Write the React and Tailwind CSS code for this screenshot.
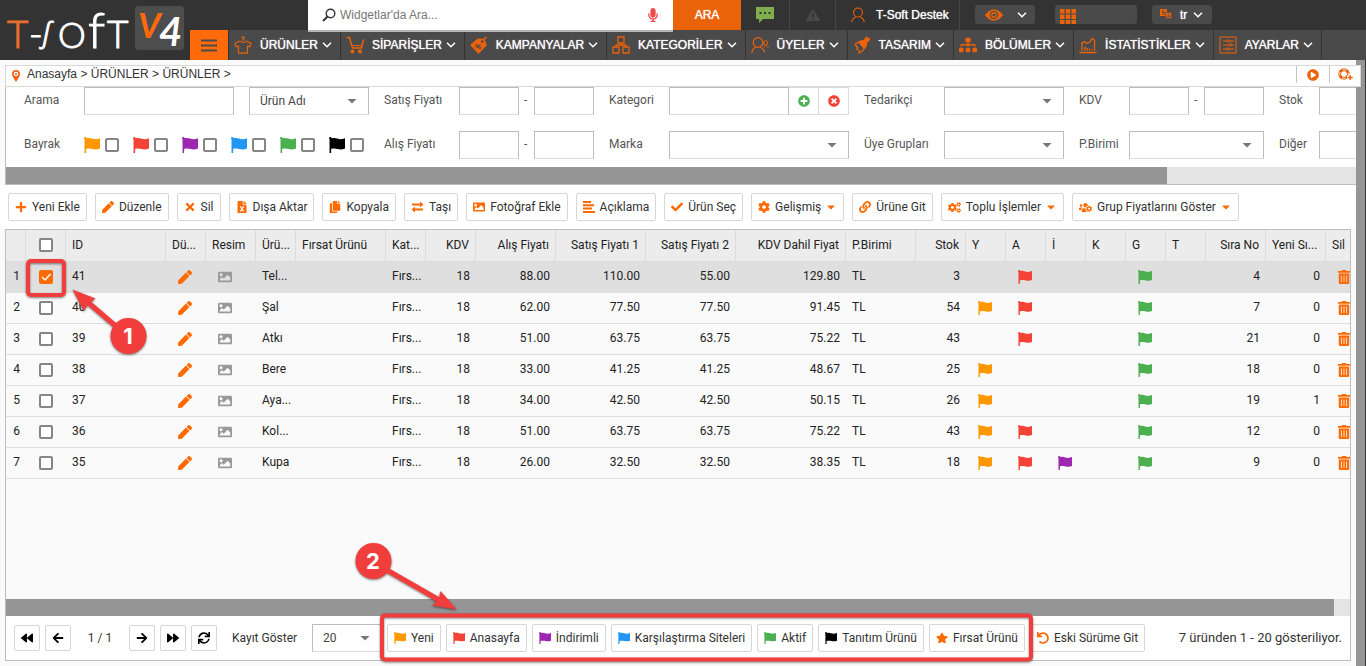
import React from "react";
import {
  FaArrowLeft, FaArrowRight, FaBackward, FaCaretDown, FaCheck, FaCog, FaCogs, FaCopy,
  FaFileExcel, FaForward, FaImage, FaLink, FaPen, FaPlayCircle, FaPlus, FaPlusCircle, FaSitemap,
  FaStar, FaSync, FaTimes, FaTimesCircle, FaTrashAlt, FaUndo, FaUsersCog, FaMicrophone,
} from "react-icons/fa";

const Line = ({ children, className = "size-[18px]", width = 1.2 }) => (
  <svg viewBox="0 0 18 18" className={className} fill="none" stroke="currentColor" strokeWidth={width} strokeLinejoin="round" aria-hidden="true">
    {children}
  </svg>
);

const ShirtIcon = () => (
  <Line>
    <path d="M9 5V3.400c1.400-.3 1.500-2.300 0-2.500-.9 0-1.300.6-1.300 1.200" />
    <path d="M6 5 1 7.200l1.200 3.600 2.300-.7v7h9v-7l2.300.7L17 7.200 12 5" />
    <path d="M6 5c1 2 5 2 6 0" />
  </Line>
);
const CartIcon = () => (
  <Line width={1.400}>
    <path d="M.5 1.500h3l3 10.500h9l2-8.500" />
    <path d="M6 9.500h9" strokeWidth="1" />
    <circle cx="6.500" cy="15.500" r="1.300" fill="currentColor" />
    <circle cx="14" cy="15.500" r="1.300" fill="currentColor" />
  </Line>
);
const TagIcon = () => (
  <Line>
    <path d="M1 9 8 3l6 .3 2 5.700-7.500 8z" fill="currentColor" />
    <path d="m11.500 5.800 5-4.800" strokeWidth="1.500" />
    <circle cx="12.300" cy="5.600" r="1.300" fill="#4a4a4a" stroke="none" />
    <path d="m6.500 12 4-3.500" stroke="#4a4a4a" />
    <circle cx="6.600" cy="9.300" r="1" stroke="#4a4a4a" strokeWidth=".9" />
    <circle cx="10" cy="11.900" r="1" stroke="#4a4a4a" strokeWidth=".9" />
  </Line>
);
const BoxesIcon = () => (
  <Line width={1.300}>
    <path d="M6 1h6v6H6zM1 11h6v6H1zM11 11h6v6h-6zM9 7v2M4 11V9h10v2" />
  </Line>
);
const UserIcon = ({ className }) => (
  <Line className={className}>
    <circle cx="9" cy="6.200" r="5" />
    <path d="M2 17c.2-3.600 2-4.800 4.700-5.800M16 17c-.2-3.600-2-4.800-4.700-5.800" />
  </Line>
);
const UsersIcon = () => (
  <Line>
    <circle cx="7" cy="6.500" r="4.800" />
    <path d="M.8 17c.2-3.600 1.600-4.800 4-5.800M13.500 16.500c-.2-3-1.800-4.300-4.200-5.300" />
    <circle cx="14.600" cy="6.800" r="2" strokeWidth="1" />
    <path d="M13 11.500c.3-1.500 1-2 1.600-2 1.600 0 2.400 1 2.700 2.500" strokeWidth="1" />
  </Line>
);
const BrushIcon = () => (
  <Line>
    <path d="M5.500 6 9 4.500 10.500 5l3-4 1 1.500L16 2l.5 1.500-3.500 4 .5 2-2 3z" fill="currentColor" />
    <path d="M5.500 6 2 8.500l2.500 3-1 1.500 2.500 1v3l4-2.500 1.500-3" />
  </Line>
);
const ChartIcon = () => (
  <Line width={1.300}>
    <path d="M.5 16.500h17M3 14.500V6M15.500 14.500V4M3 7.500l2.500-2 2.500 2 3-1.500 2-3.500 3 2" />
    <path d="M6 14.500v-4M8.300 14.500V12M10.500 14.500v-2M13 14.500v-1" />
  </Line>
);
const SlidersIcon = () => (
  <Line width={1}>
    <path d="M1 1h16v16H1zM4 5h4M11 5h4M4 9h6M13 9h2M4 13h3M10 13h5" />
    <circle cx="9.500" cy="5" r="1.300" />
    <circle cx="11.500" cy="9" r="1.300" />
    <circle cx="8.500" cy="13" r="1.300" />
  </Line>
);
const Chevron = () => (
  <svg viewBox="0 0 10 6" className="h-1.5 w-2.5 shrink-0" fill="none" stroke="#fff" strokeWidth="1.500" aria-hidden="true">
    <path d="m1 .8 4 4 4-4" />
  </svg>
);
const SwapIcon = () => (
  <svg viewBox="0 0 13 12" className="h-3 w-[13px]" fill="none" stroke="currentColor" strokeWidth="1.800" aria-hidden="true">
    <path d="M1 3.500h9M12 8.500H3" />
    <path d="M9 .5l3.500 3-3.500 3zM4 5.500.5 8.500l3.500 3z" fill="currentColor" stroke="none" />
  </svg>
);
const AlignIcon = () => (
  <svg viewBox="0 0 12 12" className="size-3" fill="currentColor" aria-hidden="true">
    <path d="M0 0h8v2H0zM0 3.300h11v2H0zM0 6.600h9v2H0zM0 10h12v2H0z" />
  </svg>
);

const NAV = [
  ["ÜRÜNLER", ShirtIcon],
  ["SİPARİŞLER", CartIcon],
  ["KAMPANYALAR", TagIcon],
  ["KATEGORİLER", BoxesIcon],
  ["ÜYELER", UsersIcon],
  ["TASARIM", BrushIcon],
  ["BÖLÜMLER", () => <FaSitemap className="size-[18px]" />],
  ["İSTATİSTİKLER", ChartIcon],
  ["AYARLAR", SlidersIcon],
];

function Logo() {
  return (
    <svg viewBox="0 0 190 60" className="h-[60px] w-[190px] shrink-0 font-['Lato']" role="img" aria-label="T-SOFT V4">
      <g fontSize="37" fontWeight="300" stroke="currentColor" strokeWidth="1">
        <text x="7" y="48" fill="#e8702e" className="text-[#e8702e]">T</text>
        <g fill="#fff" className="text-white">
          <text x="29" y="47">-</text>
          <text x="43" y="42" fontSize="27" fontStyle="italic" className="font-['Noto_Sans']">ʃ</text>
          <text x="58" y="48" fontSize="35">O</text>
          <text x="88" y="48" fontSize="50">f</text>
          <text x="107" y="48">T</text>
        </g>
      </g>
      <rect x="135" y="6" width="49" height="44" rx="4" fill="#4d4d4d" />
      <text x="138" y="38" fontSize="35" fontWeight="700" fontStyle="italic" fill="#ff6a0a">V</text>
      <text x="159" y="46" fontSize="40" fontWeight="700" fontStyle="italic" fill="#fff">4</text>
    </svg>
  );
}

function Header() {
  return (
    <header className="flex h-[60px] bg-[#333] font-['Liberation_Sans',Arial,sans-serif] text-white">
      <Logo />
      <div className="flex min-w-0 flex-1 flex-col text-xs">
        <div className="flex h-[30px] items-start pl-[118px]">
          <form className="relative z-10 flex h-8 w-[365px] items-center border-b-2 border-[#b5b5b5] bg-white pr-[13px] pl-3.5">
            <svg viewBox="0 0 14 14" className="size-3.5" fill="none" stroke="#333" strokeWidth="1.400" aria-hidden="true">
              <circle cx="8.500" cy="5.500" r="4.300" />
              <path d="M5.500 8.500 1 13" strokeWidth="2" />
            </svg>
            <input aria-label="Widgetlar'da Ara" placeholder="Widgetlar'da Ara..." className="ml-1 min-w-0 flex-1 text-gray-800 outline-none placeholder:text-[#777]" />
            <FaMicrophone className="size-3.5 text-[#f04a4a]" aria-hidden="true" />
          </form>
          <button className="h-[30px] w-[68px] bg-[#eb6309] text-shadow-[0_0_1px_#fff]">ARA</button>
          <button aria-label="Mesajlar" className="flex h-[30px] w-[49px] items-center justify-center border-r border-[#484848]">
            <svg viewBox="0 0 18 16" className="h-4 w-[18px]" aria-hidden="true">
              <path d="M0 0h18v12H7l-4 4v-4H0z" fill="#7fae4e" />
              <path d="M3.500 5h2v2h-2zM8 5h2v2H8zM12.500 5h2v2h-2z" fill="#333" />
            </svg>
          </button>
          <button aria-label="Uyarılar" className="flex h-[30px] w-[46px] items-center justify-center border-r border-[#484848]">
            <svg viewBox="0 0 16 14" className="h-3.5 w-4" aria-hidden="true">
              <path d="M8 1 15.500 13H.5z" fill="#4a4a4a" />
              <path d="M8 5v4M8 10.300v1.500" stroke="#2e2e2e" strokeWidth="1.600" />
            </svg>
          </button>
          <button className="flex h-[30px] w-[124px] items-center gap-2.5 border-r border-[#484848] pl-3.5 whitespace-nowrap">
            <span className="text-[#eb6309]"><UserIcon className="size-4" /></span>
            <span className="text-shadow-[0_0_1px_#fff]">T-Soft Destek</span>
          </button>
          <button aria-label="Görünüm" className="mt-[5px] ml-[15px] flex h-[19px] w-[60px] items-center gap-3.5 rounded-[3px] bg-[#4a4a4a] pl-2.5">
            <svg viewBox="0 0 18 12" className="h-3 w-[18px]" aria-hidden="true">
              <path d="M0 6c5-7.500 13-7.500 18 0-5 7.500-13 7.500-18 0z" fill="#eb6309" />
              <circle cx="9" cy="6" r="3.500" fill="none" stroke="#4a4a4a" strokeWidth="1.200" />
              <circle cx="9" cy="6" r="1.500" fill="#4a4a4a" />
            </svg>
            <Chevron />
          </button>
          <button aria-label="Uygulamalar" className="mt-[5px] ml-5 flex h-[19px] w-[82px] items-end rounded-[3px] bg-[#4a4a4a] pl-[5px]">
            <svg viewBox="0 0 16 15" className="h-[15px] w-4" fill="#eb6309" aria-hidden="true">
              <path d="M0 0h4.500v4.500H0zM5.700 0h4.500v4.500H5.700zM11.500 0H16v4.500h-4.500zM0 5.500h4.500V10H0zM5.700 5.500h4.500V10H5.700zM11.500 5.500H16V10h-4.500zM0 11h4.500v4H0zM5.700 11h4.500v4H5.700zM11.500 11H16v4h-4.500z" />
            </svg>
          </button>
          <button className="mt-[5px] ml-[15px] flex h-[19px] w-[60px] items-center rounded-[3px] bg-[#4a4a4a] pl-2">
            <svg viewBox="0 0 12 12" className="size-3" aria-hidden="true">
              <path d="M0 0h7v7H0z" fill="#eb6309" />
              <path d="M2 2h3M2 3.500h2.500M2 5h3" stroke="#4a4a4a" strokeWidth=".8" />
              <path d="M5.500 3.500h6v6h-6z" fill="#eb6309" stroke="#4a4a4a" strokeWidth=".6" />
              <path d="m7 8.500 1.500-3.500L10 8.500M7.500 7.500h2" stroke="#4a4a4a" fill="none" strokeWidth=".8" />
            </svg>
            <span className="mr-1.5 ml-2 text-shadow-[0_0_1px_#fff]">tr</span>
            <Chevron />
          </button>
        </div>
        <nav className="flex h-[30px] bg-[#4a4a4a]">
          <button aria-label="Menü" className="flex w-[39px] shrink-0 items-center justify-center border-r border-[#333] bg-[#ff6a0a]">
            <svg viewBox="0 0 16 13" className="h-[13px] w-4" stroke="#4a4a4a" strokeWidth="2" aria-hidden="true">
              <path d="M0 1.500h16M0 6.500h16M0 11.500h16" />
            </svg>
          </button>
          {NAV.map(([label, Icon]) => (
            <a key={label} href="#" className="flex shrink-0 items-center border-r border-[#333] pr-2 pl-[5px]">
              <span className="text-[#eb6309]"><Icon /></span>
              <span className="mr-1 ml-2 text-shadow-[0_0_1px_#fff]">{label}</span>
              <Chevron />
            </a>
          ))}
        </nav>
      </div>
    </header>
  );
}

const FLAG = {
  Y: "text-[#ff9800]",
  A: "text-[#f44336]",
  I: "text-[#9c27b0]",
  K: "text-[#2196f3]",
  G: "text-[#4caf50]",
  T: "text-black",
};
const Flag = ({ kind, className = "size-3.5" }) => (
  <svg viewBox="0 0 15 15" className={`${className} shrink-0 ${FLAG[kind]}`} fill="currentColor" aria-hidden="true">
    <path d="M0 1.200a1.200 1.200 0 0 1 2.400 0c1.800-.6 3.600-.3 5.300.3 2.500.8 4.500.7 7.300-.3v9.600c-2.500 1-4.500 1-7 .5-1.900-.6-3.800-.7-6-.1V15H.5V2.200A1.200 1.200 0 0 1 0 1.200z" />
  </svg>
);

const box = "h-7 border border-[#bdbdbd] border-b-[#dcdcdc] bg-white px-2.5 text-xs text-[#444] outline-none";

function Pick({ id, label, width, value = "" }) {
  return (
    <span className={`relative block shrink-0 ${width}`}>
      <select id={id} aria-label={label} className={`${box} w-full appearance-none`} defaultValue={value}>
        <option>{value}</option>
      </select>
      <svg viewBox="0 0 10 5" className="pointer-events-none absolute top-3 right-3 h-[5px] w-2.5" fill="#777" aria-hidden="true">
        <path d="M.5 0h9L5 4.500z" />
      </svg>
    </span>
  );
}
const Tag = ({ width, id, children }) => (
  <label htmlFor={id} className={`shrink-0 pb-[3px] whitespace-nowrap ${width}`}>{children}</label>
);
function Range({ name, id }) {
  return (
    <>
      <input id={id} aria-label={`${name} en az`} className={`${box} w-[60px] shrink-0`} />
      <span className="w-[15px] shrink-0 pb-0.5 pl-[5px]">-</span>
      <input aria-label={`${name} en çok`} className={`${box} w-[60px] shrink-0`} />
    </>
  );
}
const Check = ({ label, checked = false, className = "" }) => (
  <span className={`relative inline-flex size-3.5 shrink-0 align-middle ${className}`}>
    <input type="checkbox" aria-label={label} defaultChecked={checked} className="peer size-3.5 appearance-none rounded-[2px] border-2 border-[#858585] bg-white checked:border-[#ff6a00] checked:bg-[#ff6a00]" />
    <svg viewBox="0 0 14 14" className="pointer-events-none absolute inset-0 hidden size-3.5 peer-checked:block" fill="none" stroke="#fff" strokeWidth="1.500" aria-hidden="true">
      <path d="m3 7 3 3 5.500-6" />
    </svg>
  </span>
);

function Filters() {
  return (
    <section className="ml-[5px] border-b border-l border-[#bdbdbd] bg-white text-xs text-[#555]">
      <div className="flex flex-col gap-4 overflow-hidden pb-2 pl-[18px]">
        <div className="flex items-center">
          <Tag id="arama" width="w-[60px]">Arama</Tag>
          <input id="arama" className={`${box} mr-[15px] w-[150px] shrink-0`} />
          <Pick label="Arama alanı" width="w-[120px]" value="Ürün Adı" />
          <Tag id="satis" width="ml-[15px] w-[75px]">Satış Fiyatı</Tag>
          <Range id="satis" name="Satış Fiyatı" />
          <Tag id="kategori" width="ml-[15px] w-[60px]">Kategori</Tag>
          <input id="kategori" className={`${box} w-[120px] shrink-0`} />
          <button aria-label="Kategori ekle" className="flex h-7 w-[30px] shrink-0 items-center justify-center border border-l-0 border-[#dcdcdc]">
            <FaPlusCircle className="size-3 text-[#4caf50]" />
          </button>
          <button aria-label="Kategori temizle" className="flex h-7 w-[30px] shrink-0 items-center justify-center border border-l-0 border-[#dcdcdc]">
            <FaTimesCircle className="size-3 text-[#f44336]" />
          </button>
          <Tag id="tedarikci" width="ml-[15px] w-[80px]">Tedarikçi</Tag>
          <Pick id="tedarikci" width="w-[120px]" />
          <Tag id="kdv" width="ml-[15px] w-[50px]">KDV</Tag>
          <Range id="kdv" name="KDV" />
          <Tag id="stok" width="ml-[15px] w-[40px]">Stok</Tag>
          <input id="stok" className={`${box} w-[135px] shrink-0`} />
        </div>
        <div className="flex items-center">
          <span className="w-[60px] shrink-0 pb-[3px]">Bayrak</span>
          {[["Y", "Yeni"], ["A", "Anasayfa"], ["I", "İndirimli"], ["K", "Karşılaştırma"], ["G", "Aktif"], ["T", "Tanıtım"]].map(([k, name]) => (
            <span key={k} className="flex w-[49px] shrink-0 items-center gap-[5px]">
              <Flag kind={k} className="size-4" />
              <Check label={name} />
            </span>
          ))}
          <Tag id="alis" width="ml-1.5 w-[75px]">Alış Fiyatı</Tag>
          <Range id="alis" name="Alış Fiyatı" />
          <Tag id="marka" width="ml-[15px] w-[60px]">Marka</Tag>
          <Pick id="marka" width="w-[180px]" />
          <Tag id="uye" width="ml-[15px] w-[80px]">Üye Grupları</Tag>
          <Pick id="uye" width="w-[120px]" />
          <Tag id="birim" width="ml-[15px] w-[50px]">P.Birimi</Tag>
          <Pick id="birim" width="w-[135px]" />
          <Tag id="diger" width="ml-[15px] w-[40px]">Diğer</Tag>
          <Pick id="diger" width="w-[135px]" />
        </div>
      </div>
      <div className="h-[17px] bg-[#e4e4e4]"><div className="h-full w-[86%] bg-[#959595]" /></div>
    </section>
  );
}

const TOOLS = [
  ["Yeni Ekle", FaPlus],
  ["Düzenle", FaPen],
  ["Sil", FaTimes],
  ["Dışa Aktar", FaFileExcel],
  ["Kopyala", FaCopy],
  ["Taşı", SwapIcon],
  ["Fotoğraf Ekle", FaImage],
  ["Açıklama", AlignIcon],
  ["Ürün Seç", FaCheck],
  ["Gelişmiş", FaCog, true],
  ["Ürüne Git", FaLink],
  ["Toplu İşlemler", FaCogs, true],
  ["Grup Fiyatlarını Göster", FaUsersCog, true],
];
const btn = "flex h-7 shrink-0 items-center rounded-[2px] border border-[#d6d6d6] bg-white text-xs whitespace-nowrap text-[#333]";

function Toolbar() {
  return (
    <div className="flex h-11 items-center gap-2 overflow-hidden bg-white pl-2">
      {TOOLS.map(([label, Icon, menu]) => (
        <button key={label} className={`${btn} gap-[5px] px-1.5`}>
          <span className="flex min-w-3 justify-center text-[#ff6a00]"><Icon className={Icon === FaCogs || Icon === FaUsersCog ? "size-[13px]" : "size-3"} /></span>
          {label}
          {menu && <FaCaretDown className="mr-0.5 ml-px h-3 w-2 text-[#ff6a00]" />}
        </button>
      ))}
    </div>
  );
}

const COLS = [
  ["", "w-5"], ["check", "w-10"], ["ID", "w-[100px]"], ["Dü...", "w-10"], ["Resim", "w-[50px]"], ["Ürü...", "w-10"],
  ["Fırsat Ürünü", "w-[90px]"], ["Kat...", "w-10"], ["KDV", "w-[50px]", 1], ["Alış Fiyatı", "w-20", 1],
  ["Satış Fiyatı 1", "w-[90px]", 1], ["Satış Fiyatı 2", "w-[90px]", 1], ["KDV Dahil Fiyat", "w-[110px]", 1],
  ["P.Birimi", "w-[70px]"], ["Stok", "w-[50px]", 1], ["Y", "w-10"], ["A", "w-10"], ["İ", "w-10"], ["K", "w-10"],
  ["G", "w-10"], ["T", "w-10"], ["Sıra No", "w-[60px]", 1], ["Yeni Sı...", "w-[60px]"], ["Sil", ""],
];
const ROWS = [
  [41, "Tel...", "88.00", "110.00", "55.00", "129.80", 3, "AG", 4, 0],
  [40, "Şal", "62.00", "77.50", "77.50", "91.45", 54, "YAG", 7, 0],
  [39, "Atkı", "51.00", "63.75", "63.75", "75.22", 43, "AG", 21, 0],
  [38, "Bere", "33.00", "41.25", "41.25", "48.67", 25, "YG", 18, 0],
  [37, "Aya...", "34.00", "42.50", "42.50", "50.15", 26, "YG", 19, 1],
  [36, "Kol...", "51.00", "63.75", "63.75", "75.22", 43, "YAG", 12, 0],
  [35, "Kupa", "26.00", "32.50", "32.50", "38.35", 18, "YAIG", 9, 0],
];
const L = "p-0 pb-[3px] pl-1.5";
const R = "p-0 pr-1.5 pb-[3px] text-right";

function Products() {
  return (
    <div className="mr-[5px] ml-[5px] flex flex-1 flex-col border border-b-0 border-[#bdbdbd]">
      <div className="flex-1 overflow-hidden">
        <table className="w-full table-fixed border-separate border-spacing-0 text-xs whitespace-nowrap text-[#222]">
          <thead className="bg-[#ececec]">
            <tr className="h-8">
              {COLS.map(([name, w, right], i) => (
                <th key={i} className={`${w} border-r border-b border-r-[#dcdcdc] border-b-[#dcdcdc] font-normal last:border-r-0 ${name === "check" ? "p-0 text-center" : right ? "p-0 pr-1.5 pb-0.5 text-right" : "p-0 pb-0.5 pl-1.5 text-left"}`}>
                  {name === "check" ? <Check label="Tümünü seç" className="-mt-0.5" /> : name}
                </th>
              ))}
            </tr>
          </thead>
          <tbody>
            {ROWS.map(([id, name, buy, s1, s2, vat, stock, flags, order, fresh], i) => (
              <tr key={id} className={`h-[31px] [&>td]:border-b [&>td]:border-[#dedede] ${i === 0 ? "bg-[#dfdfdf]" : "bg-[#fafafa]"}`}>
                <td className={R}>{i + 1}</td>
                <td className="p-0 text-center"><Check label={`Seç ${id}`} checked={i === 0} className="-mt-0.5" /></td>
                <td className={L}>{id}</td>
                <td className="p-0"><FaPen className="mr-auto ml-3 size-3.5 text-[#ff6a00]" /></td>
                <td className="p-0"><FaImage className="mr-auto ml-3 size-3.5 text-[#999]" /></td>
                <td className={L}>{name}</td>
                <td />
                <td className={L}>Fırs...</td>
                <td className={R}>18</td>
                <td className={R}>{buy}</td>
                <td className={R}>{s1}</td>
                <td className={R}>{s2}</td>
                <td className={R}>{vat}</td>
                <td className={L}>TL</td>
                <td className={R}>{stock}</td>
                {["Y", "A", "I", "K", "G", "T"].map((k) => (
                  <td key={k} className="p-0 pl-3">{flags.includes(k) && <Flag kind={k} />}</td>
                ))}
                <td className={R}>{order}</td>
                <td className={R}>{fresh}</td>
                <td className="p-0 pl-[11px]"><FaTrashAlt className="size-3.5 text-[#ff6a00]" /></td>
              </tr>
            ))}
          </tbody>
        </table>
      </div>
      <div className="h-[17px] bg-[#e4e4e4]"><div className="h-full w-[98.8%] bg-[#959595]" /></div>
    </div>
  );
}

const page = "flex size-[26px] shrink-0 items-center justify-center rounded-[2px] border border-[#d6d6d6] bg-white text-black";

function Footer() {
  return (
    <footer className="mr-[5px] mb-[5px] ml-[5px] flex h-[45px] items-center gap-[5px] border border-t-0 border-[#bdbdbd] bg-white pr-2 pl-2 text-xs whitespace-nowrap text-[#333]">
      <button aria-label="İlk sayfa" className={page}><FaBackward className="size-3" /></button>
      <button aria-label="Önceki sayfa" className={page}><FaArrowLeft className="size-3" /></button>
      <span className="w-12 text-center">1 / 1</span>
      <button aria-label="Sonraki sayfa" className={page}><FaArrowRight className="size-3" /></button>
      <button aria-label="Son sayfa" className={page}><FaForward className="size-3" /></button>
      <button aria-label="Yenile" className={page}><FaSync className="size-3" /></button>
      <label htmlFor="adet" className="ml-2.5 w-[75px]">Kayıt Göster</label>
      <Pick id="adet" width="w-[70px]" value="20" />
      {[["Y", "Yeni"], ["A", "Anasayfa"], ["I", "İndirimli"], ["K", "Karşılaştırma Siteleri"], ["G", "Aktif"], ["T", "Tanıtım Ürünü"]].map(([k, name]) => (
        <button key={k} className={`${btn} gap-[5px] px-1.5`}><Flag kind={k} className="size-3" />{name}</button>
      ))}
      <button className={`${btn} gap-[5px] px-1.5`}><FaStar className="size-3 text-[#ff6a00]" />Fırsat Ürünü</button>
      <button className={`${btn} gap-[5px] px-1.5`}><FaUndo className="size-3 text-[#ff6a00]" />Eski Sürüme Git</button>
      <span className="ml-auto text-[13px]">7 üründen 1 - 20 gösteriliyor.</span>
    </footer>
  );
}

function Callouts() {
  return (
    <svg width="1366" height="666" viewBox="0 0 1366 666" className="pointer-events-none absolute top-0 left-0 z-20 font-['Inter',sans-serif]" aria-hidden="true">
      <g className="drop-shadow-[0_1px_1px_rgba(0,0,0,0.5)]" fill="#f23d3d" stroke="none">
        <rect x="28" y="261" width="36" height="34" rx="3" fill="none" stroke="#f23d3d" strokeWidth="4" />
        <path d="M118 328 87 301.500" stroke="#f23d3d" strokeWidth="5" />
        <path d="m72.500 289.500 23 9-6.500 5-5.500 7.500z" />
        <circle cx="128.500" cy="336" r="18" />
        <rect x="382" y="615.500" width="649" height="44" rx="3" fill="none" stroke="#f23d3d" strokeWidth="4" />
        <path d="m385 569 55 31.500" stroke="#f23d3d" strokeWidth="5" />
        <path d="m457 609.500-16.500-18.500-2 8.500-6.500 6z" />
        <circle cx="373.500" cy="561" r="18" />
      </g>
      <g fill="#fff" fontSize="22" fontWeight="700" textAnchor="middle">
        <text x="128" y="344">1</text>
        <text x="373" y="569">2</text>
      </g>
    </svg>
  );
}

export default function App() {
  return (
    <div className="relative flex min-h-screen flex-col overflow-hidden bg-[#fafafa] font-['Roboto',sans-serif]">
      <Header />
      <div className="flex flex-1">
        <main className="flex min-w-0 flex-1 flex-col pt-[5px]">
          <div className="relative z-10 -mr-[5px] ml-[5px] flex h-[22px] border border-[#d8d8d8] bg-white text-xs text-[#333]">
            <div className="flex flex-1 items-center gap-[7px] pb-1 pl-1.5 font-['Liberation_Sans',Arial,sans-serif]">
              <svg viewBox="0 0 8 12" className="mt-1 h-3 w-2" aria-hidden="true">
                <path d="M4 12C2 8.500 0 6.500 0 4a4 4 0 0 1 8 0c0 2.500-2 4.500-4 8z" fill="#f0651a" />
                <circle cx="4" cy="4" r="2.200" fill="#fff" />
                <circle cx="4" cy="4" r="1" fill="#f0651a" />
              </svg>
              <span><a href="#">Anasayfa</a> &gt; <a href="#">ÜRÜNLER</a> &gt; <a href="#">ÜRÜNLER</a> &gt;</span>
            </div>
            <button aria-label="Video" className="mb-[3px] flex w-[33px] items-center justify-center border-l border-[#c4c4c4] text-[#eb6309]">
              <FaPlayCircle className="size-3" />
            </button>
            <button aria-label="Destek" className="mb-[3px] flex w-[31px] items-center justify-center border-l border-[#c4c4c4] text-[#eb6309]">
              <svg viewBox="0 0 15 13" className="h-[13px] w-[15px]" fill="none" stroke="currentColor" aria-hidden="true">
                <circle cx="6" cy="6" r="5.200" strokeWidth="1" />
                <circle cx="6" cy="6" r="3.500" strokeWidth="1" />
                <circle cx="6" cy="6" r="4.400" strokeWidth="2.500" strokeDasharray="3 3.910" strokeDashoffset="-1.950" />
                <path d="M12.200 6v6.500M9 9.300h6" stroke="#fff" strokeWidth="3" />
                <path d="M12.200 7v5M9.700 9.500h5" strokeWidth="1.400" />
              </svg>
            </button>
          </div>
          <Filters />
          <Toolbar />
          <Products />
          <Footer />
        </main>
        <div className="w-2.5 shrink-0 border-r border-[#333] bg-[#959595]" />
      </div>
      <Callouts />
    </div>
  );
}
